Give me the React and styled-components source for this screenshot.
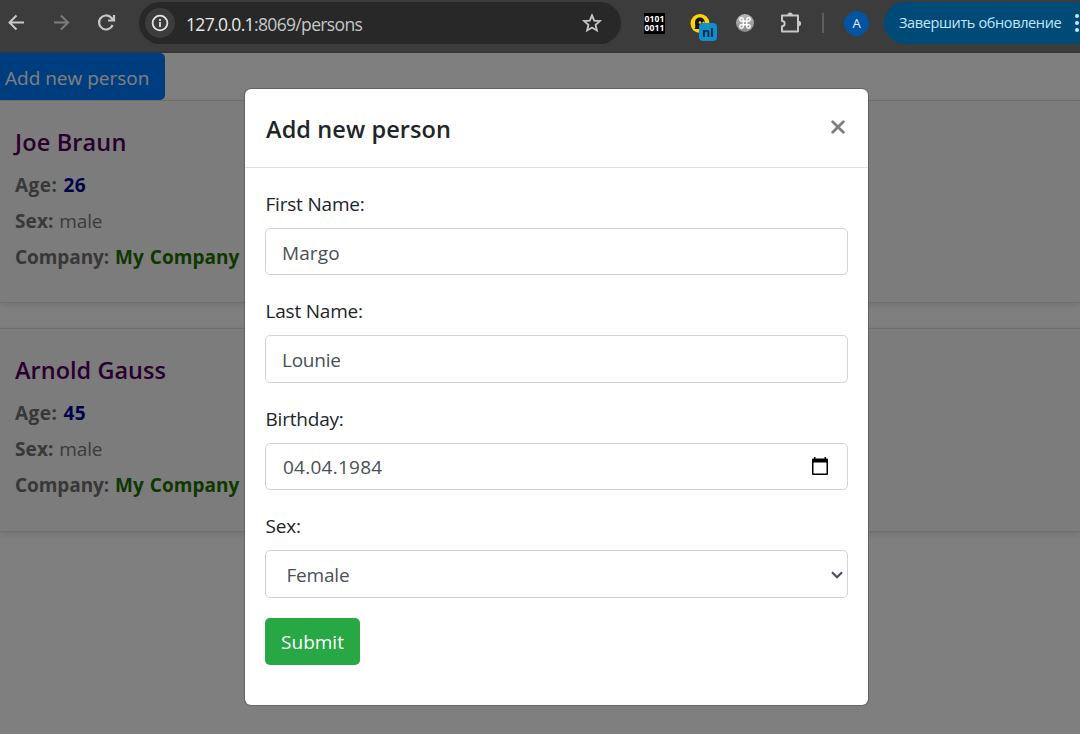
import React from "react";
import styled, { createGlobalStyle } from "styled-components";

const Global = createGlobalStyle`
  * { box-sizing: border-box; }
  body { margin: 0; background: #fff; font-family: "Open Sans", "Noto Sans", sans-serif; overflow: hidden; }
  button, input { font-family: inherit; }
`;

const Screen = styled.div`
  width: 1080px;
  height: 734px;
  display: flex;
  flex-direction: column;
  overflow: hidden;
`;

const Toolbar = styled.header`
  height: 53px;
  flex: none;
  display: flex;
  align-items: flex-start;
  background: #3c3c3c;
  border-bottom: 2px solid #373737;
  padding-top: 2px;
`;

const NavIcons = styled.div`
  width: 139px;
  height: 42px;
  flex: none;
  display: flex;
  align-items: center;
  gap: 21px;
  padding-left: 4px;
`;

const AddressBar = styled.div`
  width: 482px;
  height: 42px;
  flex: none;
  display: flex;
  align-items: center;
  border-radius: 21px;
  background: #282828;
  padding: 0 18px 0 6px;
`;

const SiteInfo = styled.span`
  width: 30px;
  height: 30px;
  border-radius: 50%;
  background: #3c3c3c;
  display: flex;
  align-items: center;
  justify-content: center;
`;

const Url = styled.span`
  flex: 1;
  margin-left: 11px;
  padding-top: 1px;
  font-size: 17.5px;
  letter-spacing: -0.65px;
  color: #c7c7c7;
  b { font-weight: 400; color: #e8e8e8; }
`;

const Extensions = styled.div`
  width: 263px;
  height: 42px;
  flex: none;
  display: flex;
  align-items: center;
  padding-left: 23px;
`;

const BinaryBadge = styled.span`
  width: 21px;
  height: 21px;
  background: #000;
  color: #fff;
  font: 700 8.5px/9px "Open Sans", sans-serif;
  letter-spacing: 0.1px;
  text-align: center;
  padding-top: 1px;
`;

const GhostBadge = styled.span`
  position: relative;
  width: 28px;
  height: 30px;
  margin-left: 23px;
  margin-top: 10px;
  display: flex;
`;

const LangTag = styled.span`
  position: absolute;
  left: 11px;
  top: 10px;
  width: 18px;
  height: 18px;
  border-radius: 4px;
  background: #0d8fd2;
  color: #0c2330;
  font: 700 13px/19px "Liberation Sans", sans-serif;
  text-align: center;
`;

const CommandBadge = styled.span`
  width: 18px;
  height: 18px;
  margin-left: 20px;
  border-radius: 50%;
  background: linear-gradient(#b8b8b8, #8a8a8a);
  display: flex;
  align-items: center;
  justify-content: center;
`;

const Puzzle = styled.svg`
  margin-left: 25px;
`;

const Divider = styled.span`
  width: 2px;
  height: 20px;
  margin-left: 19px;
  background: #5e5e5e;
`;

const Avatar = styled.span`
  width: 25px;
  height: 25px;
  margin-left: 20px;
  border-radius: 50%;
  background: #0354a0;
  color: #e8f0fa;
  font-size: 13px;
  line-height: 25px;
  text-align: center;
`;

const UpdateButton = styled.div`
  width: 196px;
  height: 42px;
  flex: none;
  display: flex;
  align-items: center;
  border-radius: 21px 0 0 21px;
  background: #004a77;
  color: #c2e7ff;
  font-size: 14.5px;
  letter-spacing: -0.37px;
  white-space: nowrap;
  padding-left: 15px;
  padding-bottom: 1px;
  overflow: hidden;
`;

const Dots = styled.span`
  display: flex;
  flex-direction: column;
  gap: 3px;
  margin-left: 14px;
  i { width: 4px; height: 4px; border-radius: 50%; background: #c2e7ff; }
`;

const Page = styled.main`
  flex: 1;
  position: relative;
  background: #fff;
`;

const AddButton = styled.button`
  display: block;
  width: 165px;
  height: 47px;
  border: 0;
  border-radius: 0 5px 5px 0;
  background: #007bff;
  color: #fff;
  font-size: 19px;
  letter-spacing: 0;
  text-align: left;
  white-space: nowrap;
  padding: 2px 0 0 5px;
`;

const CardList = styled.div`
  display: flex;
  flex-direction: column;
  gap: 25px;
`;

const Card = styled.article`
  height: ${(p) => p.$height}px;
  border: solid #dcdcdc;
  border-width: 1px 0;
  background: #f8f8f8;
  box-shadow: 0 2px 7px rgba(0, 0, 0, 0.12);
  padding: 23px 15px 0;
`;

const PersonName = styled.h2`
  margin: 0 0 6px;
  color: #52005a;
  font-size: 23.5px;
  font-weight: 600;
  line-height: 37px;
  letter-spacing: ${(p) => p.$spacing};
`;

const Detail = styled.p`
  margin: 0;
  color: #777;
  font-size: 19px;
  line-height: 36px;
  letter-spacing: -0.15px;
  word-spacing: ${(p) => p.$gap || 1}px;
  white-space: nowrap;
  b { color: #707070; font-weight: 700; letter-spacing: ${(p) => p.$label || "-0.07px"}; }
`;

const Strong = styled.strong`
  color: ${(p) => p.$color};
  letter-spacing: ${(p) => p.$spacing || "0.05px"};
`;

const Overlay = styled.div`
  position: absolute;
  inset: 0;
  background: rgba(0, 0, 0, 0.5);
  display: flex;
  justify-content: center;
  align-items: flex-start;
  padding: 35px 0 0 33px;
`;

const Dialog = styled.section`
  width: 625px;
  height: 618px;
  border: 1px solid rgba(0, 0, 0, 0.2);
  background: #fff;
  background-clip: padding-box;
  border-radius: 7px;
  display: flex;
  flex-direction: column;
`;

const DialogHeader = styled.div`
  height: 79px;
  flex: none;
  display: flex;
  justify-content: space-between;
  align-items: flex-start;
  border-bottom: 1px solid #dee2e6;
  padding: 20px 23px 0 21px;
`;

const DialogTitle = styled.h1`
  margin: 0;
  color: #212529;
  font-size: 23.5px;
  font-weight: 600;
  line-height: 40px;
  letter-spacing: 0.1px;
`;

const CloseIcon = styled.svg`
  margin-top: 11px;
`;

const Form = styled.form`
  padding: 18px 20px 0;
  display: flex;
  flex-direction: column;
`;

const Field = styled.label`
  display: flex;
  flex-direction: column;
  height: 107.3px;
`;

const FieldName = styled.span`
  color: #212529;
  font-size: 19px;
  line-height: 37px;
  height: 42px;
  padding-left: 0.5px;
  letter-spacing: -0.2px;
`;

const Control = styled.span`
  height: ${(p) => p.$height || 47.4}px;
  display: flex;
  align-items: center;
  justify-content: space-between;
  border: 1px solid #ced4da;
  border-radius: 5px;
  color: #495057;
  font-size: 19px;
  letter-spacing: ${(p) => p.$spacing || "-0.2px"};
  padding: 2px ${(p) => p.$right || 16}px 0 ${(p) => p.$left || 16}px;
`;

const CalendarIcon = styled.svg`
  margin-bottom: 3px;
`;

const Submit = styled.button`
  width: 95px;
  height: 47px;
  margin-top: 2.5px;
  border: 0;
  border-radius: 5px;
  background: #28a745;
  color: #fff;
  font-size: 19px;
  letter-spacing: 0;
  padding: 2px 0 0;
`;

const people = [
  { name: "Joe Braun", age: 26, spacing: "0.15px", height: 203 },
  { name: "Arnold Gauss", age: 45, spacing: "0.02px", height: 204 },
];

function BrowserToolbar() {
  return (
    <Toolbar>
      <NavIcons>
        <svg width="24" height="24" viewBox="0 0 24 24" fill="none" stroke="#c7c7c7" strokeWidth="2">
          <path d="M20 11.5H6M12.5 4.5l-7 7 7 7" />
        </svg>
        <svg width="24" height="24" viewBox="0 0 24 24" fill="none" stroke="#7c7c7c" strokeWidth="2">
          <path d="M5 11.5h14M12 4.5l7 7-7 7" />
        </svg>
        <svg width="24" height="24" viewBox="0 0 24 24" fill="none" stroke="#c7c7c7" strokeWidth="2.2">
          <path d="M18.6 14A7 7 0 1 1 17 6.5l2 2.2M20 4v5.5h-6" />
        </svg>
      </NavIcons>
      <AddressBar>
        <SiteInfo>
          <svg width="18" height="18" viewBox="0 0 18 18" fill="none" stroke="#e3e3e3" strokeWidth="1.8">
            <circle cx="9" cy="9" r="7.4" />
            <path d="M9 8v5M9 5v2" />
          </svg>
        </SiteInfo>
        <Url><b>127.0.0.1</b>:8069/persons</Url>
        <svg width="22" height="22" viewBox="0 0 24 24" fill="none" stroke="#c7c7c7" strokeWidth="2">
          <path d="M12 3.6l2.4 5.8 6.2.5-4.7 4.1 1.4 6.1L12 16.9l-5.3 3.2 1.4-6.1-4.7-4.1 6.2-.5z" />
        </svg>
      </AddressBar>
      <Extensions>
        <BinaryBadge>0101<br />0011</BinaryBadge>
        <GhostBadge>
          <svg width="22" height="22" viewBox="0 0 22 22">
            <circle cx="12" cy="10.5" r="9.5" fill="#fdd20a" />
            <path d="M6.5 16c1.500-2 .5-4 .5-6.500 0-3 2-5 5-5s4.800 2 4.800 5v6.500z" fill="#15130a" />
            <circle cx="12" cy="9.500" r="1.300" fill="#fdd20a" />
            <circle cx="15.500" cy="9.500" r="1.100" fill="#fdd20a" />
          </svg>
          <LangTag>nl</LangTag>
        </GhostBadge>
        <CommandBadge>
          <svg width="14" height="14" viewBox="0 0 24 24" fill="none" stroke="#fff" strokeWidth="2.4">
            <path d="M15 6v12a3 3 0 1 0 3-3H6a3 3 0 1 0 3 3V6a3 3 0 1 0-3 3h12a3 3 0 1 0-3-3" />
          </svg>
        </CommandBadge>
        <Puzzle width="24" height="24" viewBox="0 0 24 24" fill="none" stroke="#c7c7c7" strokeWidth="2" strokeLinejoin="round">
          <path d="M3 4.5h18-2v5.800a1.600 1.600 0 0 1 0 3.200V20.500H3v-5.200a2.800 2.800 0 0 0 0-5.400z" stroke="none" />
          <path d="M3 4.500h16v16H3v-5.200c3.600 0 3.600-5.400 0-5.400z" />
          <path d="M8.500 4a2.600 2.600 0 0 1 5.200 0zM19.500 9.800a2.600 2.600 0 0 1 0 5.200z" fill="#c7c7c7" stroke="none" />
        </Puzzle>
        <Divider />
        <Avatar>A</Avatar>
      </Extensions>
      <UpdateButton>
        Завершить обновление
        <Dots><i /><i /><i /></Dots>
      </UpdateButton>
    </Toolbar>
  );
}

function PersonDialog() {
  return (
    <Overlay>
      <Dialog>
        <DialogHeader>
          <DialogTitle>Add new person</DialogTitle>
          <CloseIcon width="14" height="14" viewBox="0 0 14 14" stroke="#7f7f7f" strokeWidth="2.8" strokeLinecap="round">
            <path d="M1.7 1.7l10.6 10.6M12.3 1.7L1.7 12.3" />
          </CloseIcon>
        </DialogHeader>
        <Form>
          <Field>
            <FieldName>First Name:</FieldName>
            <Control $spacing="0.1px">Margo</Control>
          </Field>
          <Field>
            <FieldName>Last Name:</FieldName>
            <Control $spacing="-0.25px">Lounie</Control>
          </Field>
          <Field>
            <FieldName>Birthday:</FieldName>
            <Control $left={17} $right={19} $spacing="0.25px">
              04.04.1984
              <CalendarIcon width="16" height="18" viewBox="0 0 16 18">
                <path d="M2 0h1.5v1.5h9V0H14v1.5h1q1 0 1 1V17q0 1-1 1H1q-1 0-1-1V2.5q0-1 1-1h1zM1.5 5.5v11h13v-11z" fill="#000" fillRule="evenodd" />
              </CalendarIcon>
            </Control>
          </Field>
          <Field>
            <FieldName>Sex:</FieldName>
            <Control $left={20.5} $right={4} $height={48}>
              Female
              <svg width="12" height="8" viewBox="0 0 12 8" fill="none" stroke="#495057" strokeWidth="2.2">
                <path d="M1 1.2l5 5 5-5" />
              </svg>
            </Control>
          </Field>
          <Submit type="button">Submit</Submit>
        </Form>
      </Dialog>
    </Overlay>
  );
}

export default function App() {
  return (
    <Screen>
      <Global />
      <BrowserToolbar />
      <Page>
        <AddButton>Add new person</AddButton>
        <CardList>
          {people.map((p) => (
            <Card key={p.name} $height={p.height}>
              <PersonName $spacing={p.spacing}>{p.name}</PersonName>
              <Detail $gap={1.3} $label="0.45px"><b>Age:</b> <Strong $color="#000094" $spacing="0.4px">{p.age}</Strong></Detail>
              <Detail $label="0.1px"><b>Sex:</b> male</Detail>
              <Detail><b>Company:</b> <Strong $color="#1c7000">My Company</Strong></Detail>
            </Card>
          ))}
        </CardList>
        <PersonDialog />
      </Page>
    </Screen>
  );
}
